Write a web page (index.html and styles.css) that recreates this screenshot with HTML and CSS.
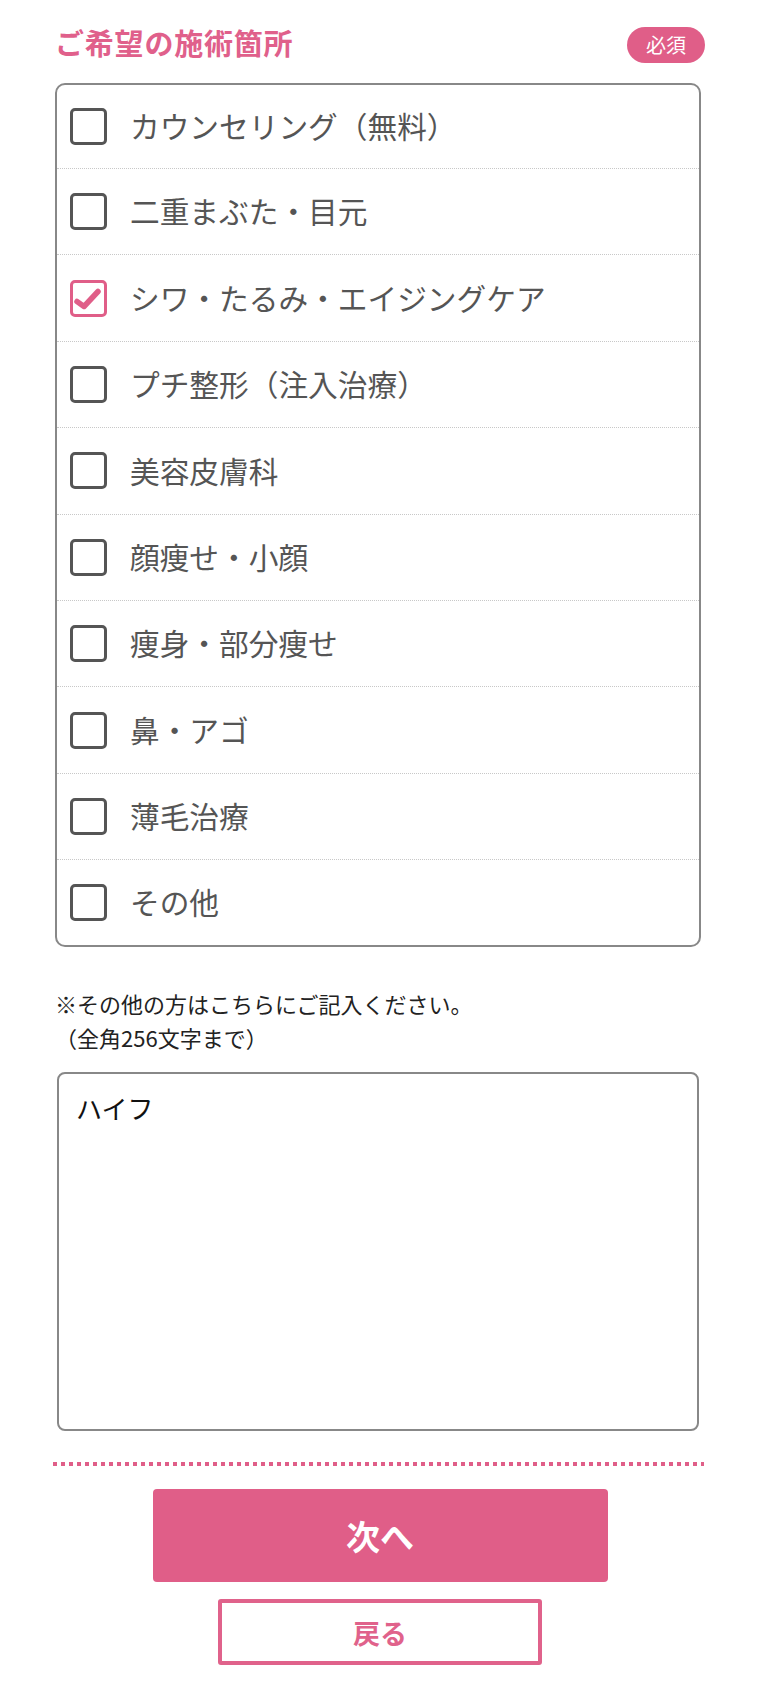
FILE: index.html
```html
<!DOCTYPE html>
<html lang="ja">
<head>
<meta charset="utf-8">
<title>ご希望の施術箇所</title>
<link rel="stylesheet" href="styles.css">
</head>
<body>
<div class="page">
  <div class="header">
    <h2 class="title">ご希望の施術箇所</h2>
    <span class="badge">必須</span>
  </div>

  <div class="options">
    <label class="row"><span class="cb"></span><span class="label">カウンセリング（無料）</span></label>
    <label class="row"><span class="cb"></span><span class="label">二重まぶた・目元</span></label>
    <label class="row"><span class="cb checked"><svg viewBox="0 0 37 37" width="37" height="37"><path d="M7 21.5 L14 26.5 L28 11.5" fill="none" stroke="#e05e88" stroke-width="5.5" stroke-linecap="round" stroke-linejoin="round"/></svg></span><span class="label">シワ・たるみ・エイジングケア</span></label>
    <label class="row"><span class="cb"></span><span class="label">プチ整形（注入治療）</span></label>
    <label class="row"><span class="cb"></span><span class="label">美容皮膚科</span></label>
    <label class="row"><span class="cb"></span><span class="label">顔痩せ・小顔</span></label>
    <label class="row"><span class="cb"></span><span class="label">痩身・部分痩せ</span></label>
    <label class="row"><span class="cb"></span><span class="label">鼻・アゴ</span></label>
    <label class="row"><span class="cb"></span><span class="label">薄毛治療</span></label>
    <label class="row"><span class="cb"></span><span class="label">その他</span></label>
  </div>

  <p class="note">※その他の方はこちらにご記入ください。<br>（全角256文字まで）</p>

  <textarea class="free">ハイフ</textarea>

  <div class="divider"></div>

  <div class="actions">
    <button class="btn-next" type="button">次へ</button>
    <button class="btn-back" type="button">戻る</button>
  </div>
</div>
</body>
</html>
```

FILE: styles.css
```css
* { box-sizing: border-box; }

html, body {
  margin: 0;
  padding: 0;
  background: #ffffff;
}

body {
  font-family: "Noto Sans CJK JP", "Noto Sans", sans-serif;
  color: #333;
}

.page {
  width: 759px;
  padding: 27px 54px 0 54px;
}

.header {
  display: flex;
  justify-content: space-between;
  align-items: flex-start;
  height: 36px;
  margin-bottom: 20px;
}

.title {
  margin: 1px 0 0 1px;
  font-size: 29px;
  line-height: 29px;
  font-weight: 700;
  color: #e0608b;
  letter-spacing: 0.8px;
}

.badge {
  display: flex;
  align-items: center;
  justify-content: center;
  width: 78px;
  height: 36px;
  border-radius: 18px;
  background: #e05e88;
  color: #fff;
  font-size: 20px;
  line-height: 1;
}

.options {
  margin: 0 4px 0 1px;
  border: 2px solid #888;
  border-radius: 10px;
  display: flex;
  flex-direction: column;
}

.row {
  display: flex;
  align-items: center;
  height: 86.4px;
  padding-left: 13px;
  border-bottom: 1px dotted #c8c8c8;
}

.row:first-child { height: 84px; }
.row:last-child { border-bottom: none; height: 85px; }

.cb {
  flex: 0 0 auto;
  width: 37px;
  height: 37px;
  border: 3px solid #555;
  border-radius: 5px;
  position: relative;
}

.cb.checked {
  border-color: #e05e88;
}

.cb svg {
  position: absolute;
  left: -3px;
  top: -3px;
}

.label {
  margin-left: 23px;
  font-size: 29.7px;
  line-height: 1.3;
  color: #555;
}

.note {
  margin: 39px 0 0 1px;
  font-size: 22px;
  line-height: 34px;
  color: #222;
}

.free {
  display: block;
  width: 642px;
  height: 359px;
  margin: 18px 0 0 3px;
  padding: 14px 17px;
  border: 2px solid #888;
  border-radius: 8px;
  font-family: "Noto Sans CJK JP", "Noto Sans", sans-serif;
  font-size: 26px;
  line-height: 39px;
  color: #111;
  resize: none;
  background: #fff;
}

.divider {
  height: 4px;
  margin: 31px 0 0 -1px;
  width: 651px;
  background-image: repeating-linear-gradient(to right, #e05e88 0, #e05e88 4px, transparent 4px, transparent 8px);
}

.actions {
  display: flex;
  flex-direction: column;
  align-items: center;
  margin-top: 23px;
}

.btn-next {
  width: 455px;
  height: 93px;
  border: none;
  border-radius: 4px;
  background: #e05e88;
  color: #fff;
  font-family: "Noto Sans CJK JP", "Noto Sans", sans-serif;
  font-size: 34px;
  font-weight: 700;
  margin-left: 1px;
}

.btn-back {
  width: 324px;
  height: 66px;
  margin-top: 17px;
  border: 4px solid #e0628b;
  border-radius: 3px;
  background: #fff;
  color: #e0628b;
  font-family: "Noto Sans CJK JP", "Noto Sans", sans-serif;
  font-size: 27px;
  font-weight: 700;
  margin-left: 1px;
}
```
